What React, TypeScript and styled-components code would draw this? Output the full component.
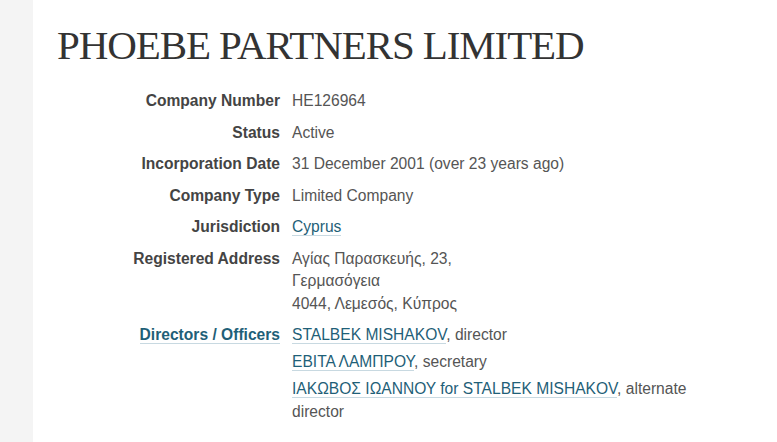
import styled, { createGlobalStyle } from "styled-components";

const GlobalStyle = createGlobalStyle`
	html, body {
		margin: 0;
		padding: 0;
		background: #fff;
	}

	body {
		font-family: "Liberation Sans", Arial, sans-serif;
		font-size: 15.6px;
		color: #555;
	}
`;

type Officer = {
	name: string;
	role: string;
};

const officers: Officer[] = [
	{ name: "STALBEK MISHAKOV", role: "director" },
	{ name: "ΕΒΙΤΑ ΛΑΜΠΡΟΥ", role: "secretary" },
	{ name: "ΙΑΚΩΒΟΣ ΙΩΑΝΝΟΥ for STALBEK MISHAKOV", role: "alternate director" },
];

export default function App() {
	return (
		<Page>
			<GlobalStyle />
			<Sidebar />

			<Main>
				<Title>PHOEBE PARTNERS LIMITED</Title>

				<Details>
					<Label>Company Number</Label>
					<Value>HE126964</Value>

					<Label>Status</Label>
					<Value>Active</Value>

					<Label>Incorporation Date</Label>
					<Value>31 December 2001 (over 23 years ago)</Value>

					<Label>Company Type</Label>
					<Value>Limited Company</Value>

					<Label>Jurisdiction</Label>
					<Value>
						<Link href="#">Cyprus</Link>
					</Value>

					<Label>Registered Address</Label>
					<Value>
						<AddressLine>Αγίας Παρασκευής, 23,</AddressLine>
						<AddressLine>Γερμασόγεια</AddressLine>
						<AddressLine>4044, Λεμεσός, Κύπρος</AddressLine>
					</Value>

					<Label>
						<Link href="#" $bold>
							Directors / Officers
						</Link>
					</Label>
					<Value>
						<OfficerList>
							{officers.map(({ name, role }) => (
								<OfficerItem key={name}>
									<Link href="#">{name}</Link>, {role}
								</OfficerItem>
							))}
						</OfficerList>
					</Value>
				</Details>
			</Main>
		</Page>
	);
}

const Page = styled.div`
	min-height: 442px;
	display: flex;
	align-items: stretch;
`;

const Sidebar = styled.div`
	width: 33px;
	flex-shrink: 0;
	background: #f4f4f4;
`;

const Main = styled.div`
	width: 663px;
	padding: 21px 0 0 24px;
`;

const Title = styled.h1`
	margin: 0 0 21px;
	font-family: "Liberation Serif", "Times New Roman", serif;
	font-weight: 400;
	font-size: 41px;
	line-height: 48px;
	letter-spacing: -1.1px;
	color: #333;
`;

const Details = styled.dl`
	margin: 0;
	display: grid;
	grid-template-columns: 223px 1fr;
	column-gap: 12px;
	row-gap: 9px;
	line-height: 22.5px;
`;

const Label = styled.dt`
	text-align: right;
	font-weight: 700;
	color: #444;
`;

const Value = styled.dd`
	margin: 0;
	color: #555;
`;

const AddressLine = styled.div``;

const Link = styled.a<{ $bold?: boolean }>`
	color: #1f5f78;
	font-weight: ${(p) => (p.$bold ? 700 : 400)};
	text-decoration: none;
	border-bottom: 1px solid #c8d9e1;
`;

const OfficerList = styled.ul`
	list-style: none;
	margin: 0;
	padding: 0;
	display: flex;
	flex-direction: column;
	gap: 4.5px;
`;

const OfficerItem = styled.li``;
